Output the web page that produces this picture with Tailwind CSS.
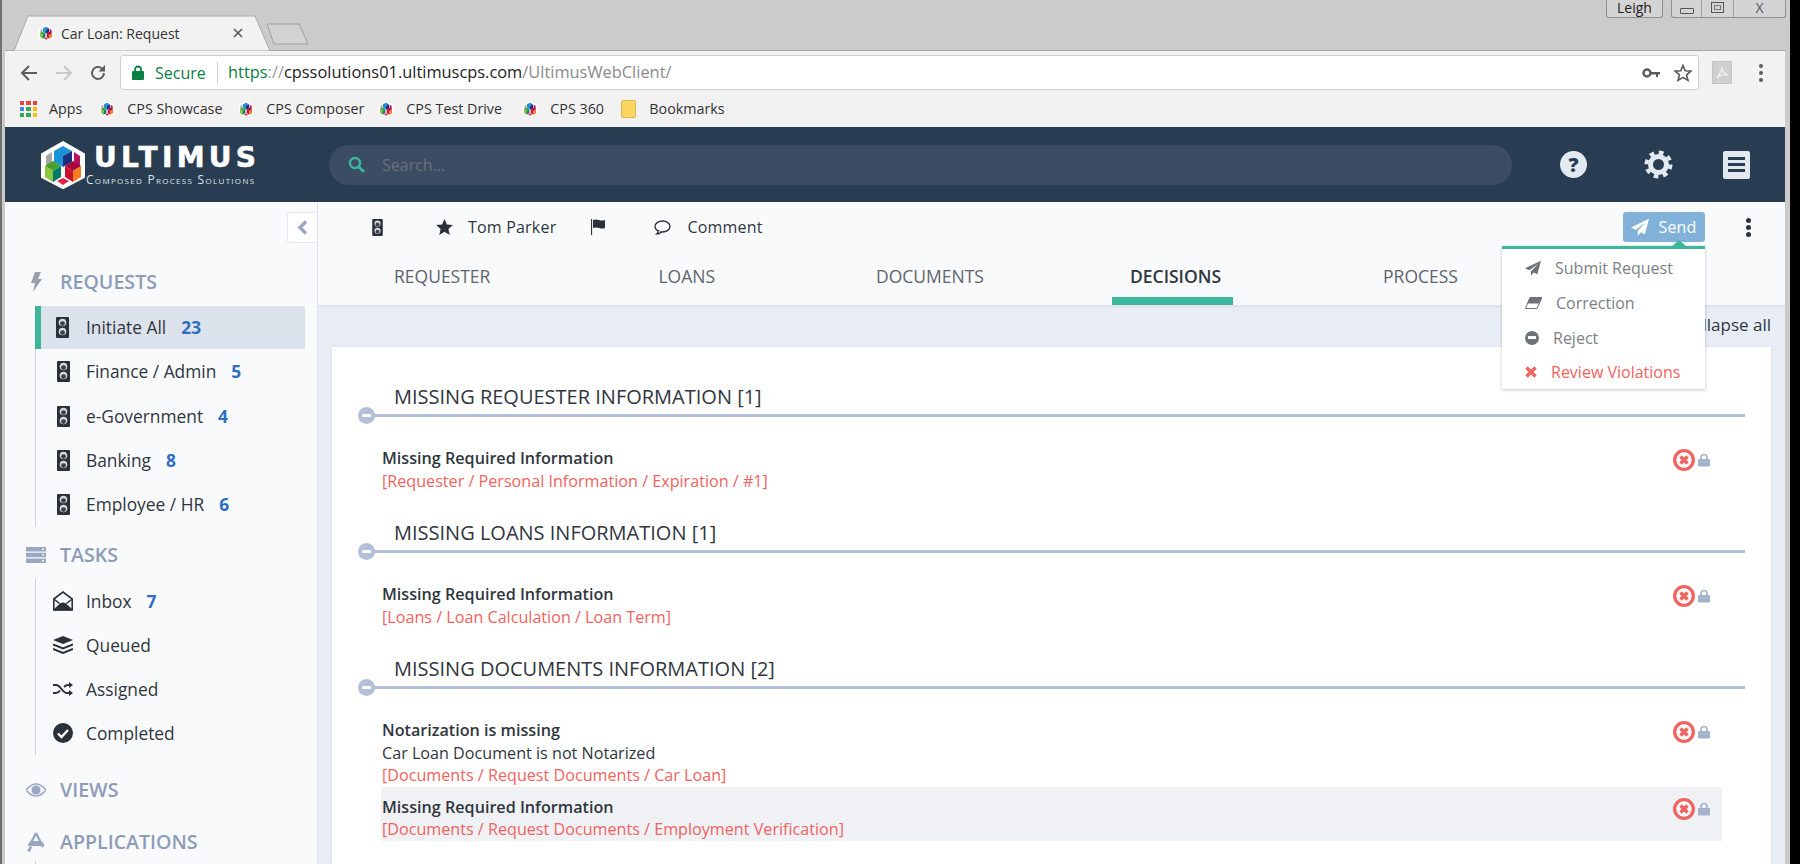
<!DOCTYPE html>
<html lang="en">
  <head>
    <meta charset="UTF-8" />
    <title>Car Loan: Request</title>
    <script src="https://cdn.jsdelivr.net/npm/@tailwindcss/browser@4"></script>
  </head>
  <body class="bg-black w-[1800px] h-[864px] overflow-hidden font-['Open_Sans',sans-serif] text-[#30363d]">
    <svg class="hidden">
      <symbol id="cube" viewBox="0 0 48 48">
        <polygon points="24,1 45,13 45,36 24,47 3,36 3,13" fill="#fff" stroke="#fff" stroke-width="2" stroke-linejoin="round" />
        <polygon points="7,15 13,11 13,22 7,26" fill="#a5a5a5" />
        <polygon points="41,15 35,11 35,22 41,26" fill="#b5135f" />
        <polygon points="15,10 24,5 33,10 24,15 24,26 15,21" fill="#1b93d6" />
        <polygon points="33,10 24,15 24,26 33,21" fill="#1c2f7f" />
        <polygon points="6,25 14,20 22,25 14,30" fill="#4aa02c" />
        <polygon points="6,25 14,30 14,41 6,36" fill="#8dc63f" />
        <polygon points="14,30 22,25 22,36 14,41" fill="#007a6b" />
        <polygon points="26,25 34,20 42,25 34,30" fill="#a6093d" />
        <polygon points="26,25 34,30 34,41 26,36" fill="#c8102e" />
        <polygon points="34,30 42,25 42,36 34,41" fill="#f47b20" />
        <polygon points="18,40 24,37 30,40 24,44" fill="#e0224e" />
      </symbol>
      <symbol id="light" viewBox="0 0 13 21">
        <rect width="13" height="21" rx="1" fill="#2b3139" />
        <circle cx="6.500" cy="5.500" r="3.800" fill="#d5d9df" />
        <circle cx="6.500" cy="6.600" r="2.400" fill="#3a414b" />
        <circle cx="6.500" cy="14.500" r="3.800" fill="#d5d9df" />
        <circle cx="6.500" cy="15.600" r="2.400" fill="#3a414b" />
      </symbol>
      <symbol id="plane" viewBox="0 0 24 24">
        <path d="M24 1 0 12.500l6.500 3L20 5.500 9 17v6.500l4.200-4.600 5.300 2.600z" fill="currentColor" />
      </symbol>
      <symbol id="error" viewBox="0 0 22 22">
        <circle cx="11" cy="11" r="9.300" fill="#fff" stroke="#f0635f" stroke-width="3.300" />
        <path d="M7.500 7.500l7 7m0-7l-7 7" stroke="#f0635f" stroke-width="3.600" />
      </symbol>
      <symbol id="lock" viewBox="0 0 12 13">
        <path d="M3 6V4a3 3 0 0 1 6 0v2" fill="none" stroke="#a5b2cc" stroke-width="1.700" />
        <rect y="5.500" width="12" height="7.500" rx="1" fill="#a5b2cc" />
      </symbol>
    </svg>

    <div class="w-[1790px] h-[864px] flex flex-col bg-[#cbcbcb] border-l-2 border-[#6f6f6f]">
      <!-- browser tabs -->
      <div class="h-[50px] flex shrink-0">
        <div class="relative w-[256px] h-[36px] mt-[15px] ml-[12px] flex items-center">
          <svg class="absolute left-0 top-0" width="256" height="36"><polygon points="0,36 14,1 241,1 256,36" fill="#f2f2f2" stroke="#a8a8a8" /></svg>
          <svg class="relative ml-[24px]" width="16" height="16"><use href="#cube" /></svg>
          <span class="relative ml-[7px] text-[14px] text-[#333]">Car Loan: Request</span>
          <svg class="relative ml-[53px]" width="10" height="10"><path d="M1 1l8 8m0-8l-8 8" stroke="#555" stroke-width="1.500" /></svg>
        </div>
        <svg class="mt-[23px] -ml-[4px]" width="44" height="22"><polygon points="1,1 33,1 42,21 8,21" fill="#d2d2d2" stroke="#a0a0a0" stroke-linejoin="round" /></svg>
        <div class="ml-auto flex items-start mr-[4px]">
          <div class="w-[57px] h-[18px] rounded-b-[3px] border border-t-0 border-[#909090] bg-[#d4d4d4] text-center text-[14px] leading-[16px] text-[#222]">Leigh</div>
          <div class="ml-[8px] w-[115px] h-[18px] rounded-b-[3px] border border-t-0 border-[#909090] bg-[#d4d4d4] flex">
            <div class="w-[30px] border-r border-[#a0a0a0] flex justify-center"><div class="w-[14px] h-[6px] mt-[8px] border border-[#555] rounded-[1px]"></div></div>
            <div class="w-[32px] border-r border-[#a0a0a0] flex justify-center"><div class="w-[13px] h-[11px] mt-[2px] border border-[#555] p-[2px]"><div class="w-full h-full border border-[#777]"></div></div></div>
            <div class="flex-1 text-center text-[14px] leading-[15px] text-[#555]">X</div>
          </div>
        </div>
      </div>

      <div class="flex-1 min-h-0 ml-[3px] mr-[5px] flex flex-col">
        <!-- browser toolbar -->
        <div class="h-[77px] shrink-0 bg-[#f2f2f2] border-t border-[#a8a8a8] flex flex-col">
          <div class="h-[40px] pt-[3px] flex items-center">
            <svg class="ml-[15px]" width="18" height="18" viewBox="0 0 18 18"><path d="M17 9H3m6-7L2 9l7 7" fill="none" stroke="#5c5c5c" stroke-width="2" /></svg>
            <svg class="ml-[17px]" width="18" height="18" viewBox="0 0 18 18"><path d="M1 9h14M9 2l7 7-7 7" fill="none" stroke="#c8c8c8" stroke-width="2" /></svg>
            <svg class="ml-[16px]" width="18" height="18" viewBox="0 0 18 18"><path d="M15 9a6 6 0 1 1-2-4.500" fill="none" stroke="#5c5c5c" stroke-width="2" /><polygon points="16,1 16,7.500 9.500,7.500" fill="#5c5c5c" /></svg>
            <div class="ml-[13px] w-[1579px] h-[35px] bg-white border border-[#cfcfcf] rounded-[3px] flex items-center">
              <svg class="ml-[11px]" width="12" height="15" viewBox="0 0 12 15"><path d="M3 7V4.500a3 3 0 0 1 6 0V7" fill="none" stroke="#0b8043" stroke-width="1.800" /><rect y="6" width="12" height="9" rx="1" fill="#0b8043" /></svg>
              <span class="ml-[11px] text-[16px] text-[#0b8043] w-[50px]">Secure</span>
              <div class="ml-[12px] w-px h-[22px] bg-[#cfcfcf]"></div>
              <div class="ml-[10px] text-[16.400px] whitespace-nowrap"><span class="text-[#0b8043]">https</span><span class="text-[#9a9a9a]">://</span><span class="text-[#222]">cpssolutions01.ultimuscps.com</span><span class="text-[#8a8a8a]">/UltimusWebClient/</span></div>
              <svg class="ml-auto" width="18" height="12" viewBox="0 0 18 12"><circle cx="5" cy="6" r="3.500" fill="none" stroke="#5c5c5c" stroke-width="2.500" /><path d="M8 5h10v2.500h-2V10h-2V7.500H8z" fill="#5c5c5c" /></svg>
              <svg class="ml-[14px] mr-[6px]" width="18" height="18" viewBox="0 0 24 24"><polygon points="12,2 15,9 22.500,9.500 16.800,14.400 18.600,21.800 12,17.800 5.400,21.800 7.200,14.400 1.500,9.500 9,9" fill="none" stroke="#5c5c5c" stroke-width="2.200" /></svg>
            </div>
            <div class="ml-[13px] w-[20px] h-[23px] bg-[#d0d0d0] border border-[#c4c4c4] flex items-center justify-center"><svg width="14" height="14" viewBox="0 0 14 14"><path d="M7 1c-1 3 3 7 6 8-3-.5-8 0-11 3 2-3 5-8 5-11z" fill="none" stroke="#f2f2f2" stroke-width="1.200" /></svg></div>
            <div class="ml-[27px] flex flex-col gap-[3px]"><div class="w-[4px] h-[4px] rounded-full bg-[#5c5c5c]"></div><div class="w-[4px] h-[4px] rounded-full bg-[#5c5c5c]"></div><div class="w-[4px] h-[4px] rounded-full bg-[#5c5c5c]"></div></div>
          </div>
          <div class="h-[36px] flex items-center text-[14.300px] text-[#333] whitespace-nowrap">
            <div class="ml-[15px] grid grid-cols-3 gap-[2px] w-[17px]">
              <i class="h-[4px] bg-[#e8453c]"></i><i class="h-[4px] bg-[#e8453c]"></i><i class="h-[4px] bg-[#e8453c]"></i>
              <i class="h-[4px] bg-[#4285f4]"></i><i class="h-[4px] bg-[#34a853]"></i><i class="h-[4px] bg-[#fbbc05]"></i>
              <i class="h-[4px] bg-[#34a853]"></i><i class="h-[4px] bg-[#34a853]"></i><i class="h-[4px] bg-[#fbbc05]"></i>
            </div>
            <span class="ml-[12px]">Apps</span>
            <svg class="ml-[17px]" width="16" height="16"><use href="#cube" /></svg><span class="ml-[12px] w-[111px]">CPS Showcase</span>
            <svg width="16" height="16"><use href="#cube" /></svg><span class="ml-[12px] w-[112px]">CPS Composer</span>
            <svg width="16" height="16"><use href="#cube" /></svg><span class="ml-[12px] w-[116px]">CPS Test Drive</span>
            <svg width="16" height="16"><use href="#cube" /></svg><span class="ml-[12px] w-[71px]">CPS 360</span>
            <div class="w-[15px] h-[18px] bg-[#fcd663] border border-[#d9b54a] rounded-[2px]"></div><span class="ml-[13px]">Bookmarks</span>
          </div>
        </div>

        <!-- app header -->
        <header class="h-[75px] shrink-0 bg-[#293d52] flex items-center">
          <svg class="ml-[34px]" width="48" height="48"><use href="#cube" /></svg>
          <div class="ml-[7px] w-[170px] text-white">
            <div class="font-['DejaVu_Sans',sans-serif] font-bold text-[28px] leading-[30px] tracking-[4.300px] [-webkit-text-stroke:0.6px_white] whitespace-nowrap">ULTIMUS</div>
            <div class="text-[12px] leading-[13px] [font-variant:small-caps] tracking-[1.300px] text-[#dfe5ec] whitespace-nowrap -ml-[8px]">Composed Process Solutions</div>
          </div>
          <div class="ml-[65px] w-[1183px] h-[40px] rounded-full bg-[#3c4c63] flex items-center">
            <svg class="ml-[19px]" width="17" height="17" viewBox="0 0 17 17"><circle cx="7" cy="7" r="5" fill="none" stroke="#3db79b" stroke-width="2.400" /><path d="M10.500 10.500L16 16" stroke="#3db79b" stroke-width="2.600" /></svg>
            <span class="ml-[17px] text-[16px] text-[#6a7079]">Search...</span>
          </div>
          <div class="ml-[48px] w-[27px] h-[27px] rounded-full bg-[#e3e9f1] text-center text-[20px] leading-[27px] font-extrabold text-[#293d52]">?</div>
          <svg class="ml-[57px]" width="29" height="29" viewBox="0 0 29 29"><circle cx="14.500" cy="14.500" r="12" fill="none" stroke="#e3e9f1" stroke-width="4" stroke-dasharray="4.700 4.720" /><circle cx="14.500" cy="14.500" r="8" fill="none" stroke="#e3e9f1" stroke-width="5" /></svg>
          <div class="ml-[50px] w-[27px] h-[28px] rounded-[2px] bg-[#e3e9f1] flex flex-col justify-center gap-[3px] px-[5px]"><div class="h-[3px] bg-[#293d52]"></div><div class="h-[3px] bg-[#293d52]"></div><div class="h-[3px] bg-[#293d52]"></div></div>
        </header>

        <div class="flex-1 min-h-0 flex">
          <!-- sidebar -->
          <aside class="relative w-[313px] shrink-0 bg-[#f9fafc] border-r border-[#dfe2e8] overflow-hidden">
            <button class="absolute right-0 top-[10px] w-[30px] h-[31px] bg-white rounded-l-[3px] border border-r-0 border-[#e6e9ef] flex items-center justify-center">
              <svg width="11" height="15" viewBox="0 0 11 15"><path d="M9 1.500L3 7.500l6 6" fill="none" stroke="#9aa7c2" stroke-width="3.500" /></svg>
            </button>
            <div class="mt-[65px] h-[30px] flex items-center text-[#8d9cb6] text-[19.600px] font-semibold">
              <svg class="ml-[25px]" width="12" height="20" viewBox="0 0 12 20"><path d="M5 0h6L8 7h4L3 20l2-9H1z" fill="#9aa0aa" /></svg>
              <span class="ml-[18px]">REQUESTS</span>
            </div>
            <ul class="mt-[9px] ml-[30px] w-[270px] border-l border-[#cfd2d8] text-[17.350px]">
              <li class="h-[43px] -ml-px flex items-center bg-[#dce2ec] border-l-[6px] border-[#3db79b]"><svg class="ml-[15px]" width="13" height="21"><use href="#light" /></svg><span class="ml-[17px]">Initiate All</span><span class="ml-[15px] font-bold text-[#2f6dbf]">23</span></li>
              <li class="h-[45px] flex items-center"><svg class="ml-[21px]" width="13" height="21"><use href="#light" /></svg><span class="ml-[16px]">Finance / Admin</span><span class="ml-[15px] font-bold text-[#2f6dbf]">5</span></li>
              <li class="h-[44px] flex items-center"><svg class="ml-[21px]" width="13" height="21"><use href="#light" /></svg><span class="ml-[16px]">e-Government</span><span class="ml-[15px] font-bold text-[#2f6dbf]">4</span></li>
              <li class="h-[44px] flex items-center"><svg class="ml-[21px]" width="13" height="21"><use href="#light" /></svg><span class="ml-[16px]">Banking</span><span class="ml-[15px] font-bold text-[#2f6dbf]">8</span></li>
              <li class="h-[45px] flex items-center"><svg class="ml-[21px]" width="13" height="21"><use href="#light" /></svg><span class="ml-[16px]">Employee / HR</span><span class="ml-[15px] font-bold text-[#2f6dbf]">6</span></li>
            </ul>
            <div class="mt-[13px] h-[30px] flex items-center text-[#8d9cb6] text-[19.600px] font-semibold">
              <svg class="ml-[21px]" width="20" height="16" viewBox="0 0 20 16"><g fill="#9aa7c2"><rect width="20" height="4.500" rx=".5" /><rect y="5.700" width="20" height="4.500" rx=".5" /><rect y="11.400" width="20" height="4.500" rx=".5" /></g><g fill="#f9fafc"><rect x="16" y="1.500" width="2" height="1.500" /><rect x="16" y="7.200" width="2" height="1.500" /><rect x="16" y="12.900" width="2" height="1.500" /></g></svg>
              <span class="ml-[14px]">TASKS</span>
            </div>
            <ul class="mt-[9px] ml-[30px] w-[270px] border-l border-[#cfd2d8] text-[17.350px]">
              <li class="h-[44px] flex items-center"><svg class="ml-[17px]" width="20" height="20" viewBox="0 0 20 20"><path d="M.8 8L10 1l9.200 7v11H.8z" fill="none" stroke="#2b3139" stroke-width="1.600" /><path d="M1 18l6-5.500q3-2 6 0l6 5.500v1.500H1zM1 9l5 4 1-1-5-4zM19 9l-5 4-1-1 5-4z" fill="#2b3139" /></svg><span class="ml-[13px]">Inbox</span><span class="ml-[15px] font-bold text-[#2f6dbf]">7</span></li>
              <li class="h-[44px] flex items-center"><svg class="ml-[17px]" width="20" height="18" viewBox="0 0 20 18"><path d="M10 0l10 4-10 4L0 4z" fill="#2b3139" /><path d="M0 8.500l10 4 10-4M0 13l10 4 10-4" fill="none" stroke="#2b3139" stroke-width="2" /></svg><span class="ml-[13px]">Queued</span></li>
              <li class="h-[44px] flex items-center"><svg class="ml-[17px]" width="20" height="14" viewBox="0 0 20 14"><path d="M0 3h3c5 0 6 8 11 8h2M0 11h3c2 0 3-1 4-2.500M11 5c1-1 2-2 4-2h1" fill="none" stroke="#2b3139" stroke-width="2" /><path d="M16 0l4 3-4 3zM16 8l4 3-4 3z" fill="#2b3139" /></svg><span class="ml-[13px]">Assigned</span></li>
              <li class="h-[44px] flex items-center"><svg class="ml-[17px]" width="20" height="20" viewBox="0 0 20 20"><circle cx="10" cy="10" r="10" fill="#2b3139" /><path d="M5 10.500l3.500 3.500L15 7" fill="none" stroke="#fff" stroke-width="2.400" /></svg><span class="ml-[13px]">Completed</span></li>
            </ul>
            <div class="mt-[20px] h-[30px] flex items-center text-[#8d9cb6] text-[19.600px] font-semibold">
              <svg class="ml-[21px]" width="20" height="14" viewBox="0 0 20 14"><path d="M0 7q10-12 20 0-10 12-20 0z" fill="none" stroke="#9aa7c2" stroke-width="1.500" /><circle cx="10" cy="7" r="4.500" fill="#9aa7c2" /></svg>
              <span class="ml-[14px]">VIEWS</span>
            </div>
            <div class="mt-[22px] h-[30px] flex items-center text-[#8d9cb6] text-[19.600px] font-semibold">
              <svg class="ml-[21px]" width="20" height="20" viewBox="0 0 20 20"><path d="M10 1L4 13M10 1l7 14" fill="none" stroke="#9aa7c2" stroke-width="2.400" /><path d="M5 9h10l3 3v2H2v-2zM1 19l3-5 2 1-2 5z" fill="#9aa7c2" /></svg>
              <span class="ml-[14px]">APPLICATIONS</span>
            </div>
            <div class="mt-[4px] ml-[30px] h-[10px] border-l border-[#cfd2d8]"></div>
          </aside>

          <main class="flex-1 min-w-0 bg-[#e8edf5] flex flex-col">
            <!-- action bar and tabs -->
            <div class="h-[104px] shrink-0 bg-[#f9fafc] border-b border-[#dfe2e8] shadow-[0_1px_2px_rgba(0,0,0,0.05)] flex flex-col">
              <div class="h-[50px] flex items-center text-[16px] tracking-[0.2px]">
                <svg class="ml-[54px]" width="11" height="17"><use href="#light" /></svg>
                <svg class="ml-[53px]" width="17" height="16" viewBox="0 0 24 23"><polygon points="12,0 15.500,8 24,8.800 17.600,14.500 19.500,23 12,18.500 4.500,23 6.400,14.500 0,8.800 8.500,8" fill="#2b3139" /></svg>
                <span class="ml-[15px]">Tom Parker</span>
                <svg class="ml-[35px]" width="15" height="16" viewBox="0 0 15 16"><path d="M.5 0v16" stroke="#2b3139" stroke-width="1.200" /><path d="M2 1q3-1 6 0t6 0v8q-3 1-6 0t-6 0z" fill="#2b3139" /></svg>
                <svg class="ml-[48px]" width="17" height="15" viewBox="0 0 17 15"><ellipse cx="8.500" cy="6.500" rx="7.500" ry="5.500" fill="#f9fafc" stroke="#2b3139" stroke-width="1.300" /><path d="M4.500 10.500q0 2-2 3.500 3 0 5-2" fill="#f9fafc" stroke="#2b3139" stroke-width="1.200" /></svg>
                <span class="ml-[16px]">Comment</span>
                <button class="ml-auto w-[82px] h-[30px] rounded-[3px] bg-[#82b2d9] text-white flex items-center justify-center gap-[9px] text-[16px]">
                  <svg width="18" height="18"><use href="#plane" /></svg>Send
                </button>
                <div class="ml-[41px] mr-[34px] flex flex-col gap-[2px]"><div class="w-[5px] h-[5px] rounded-full bg-[#2b3139]"></div><div class="w-[5px] h-[5px] rounded-full bg-[#2b3139]"></div><div class="w-[5px] h-[5px] rounded-full bg-[#2b3139]"></div></div>
              </div>
              <div class="h-[53px] flex text-[17.500px] font-medium text-[#5f656d]">
                <div class="ml-[58px] px-[18px] h-[48px] flex items-center">REQUESTER</div>
                <div class="ml-[132px] px-[18px] h-[48px] flex items-center">LOANS</div>
                <div class="ml-[125px] px-[18px] h-[48px] flex items-center">DOCUMENTS</div>
                <div class="ml-[110px] pl-[18px] pr-[12px] flex items-center font-semibold text-[#30363d] h-[53px] pt-[3px] border-b-[8px] border-[#3db79b]">DECISIONS</div>
                <div class="ml-[132px] px-[18px] h-[48px] flex items-center">PROCESS</div>
              </div>
            </div>

            <div class="h-[41px] shrink-0 pr-[14px] pb-[4px] flex items-center justify-end text-[17px]">Collapse all</div>

            <!-- decisions card -->
            <div class="flex-1 min-h-0 ml-[14px] mr-[14px] bg-white pt-[35px] pl-[33px] pr-[26px] shadow-[0_0_2px_rgba(0,0,0,0.1)] overflow-hidden">
              <section class="relative">
                <h3 class="h-[35px] pl-[29px] border-b-[3px] border-[#b4c0d9] text-[20px] leading-[30px]">MISSING REQUESTER INFORMATION [1]</h3>
                <div class="absolute -left-[7px] top-[25px] w-[17px] h-[17px] rounded-full bg-[#b4c0d9] flex items-center justify-center"><div class="w-[9px] h-[3px] bg-white rounded-[1px]"></div></div>
                <div class="mt-[20px] ml-[16px] mr-[23px] pl-[1px] pr-[12px] pt-[10px] flex justify-between items-start text-[16.150px] leading-[22.500px]">
                  <div>
                    <div class="font-semibold">Missing Required Information</div>
                    <div class="text-[#f0635f]">[Requester / Personal Information / Expiration / #1]</div>
                  </div>
                  <div class="mt-[2px] flex items-center gap-[3px]"><svg width="22" height="22"><use href="#error" /></svg><svg width="12" height="14"><use href="#lock" /></svg></div>
                </div>
              </section>
              <section class="relative mt-[26px]">
                <h3 class="h-[35px] pl-[29px] border-b-[3px] border-[#b4c0d9] text-[20px] leading-[30px]">MISSING LOANS INFORMATION [1]</h3>
                <div class="absolute -left-[7px] top-[25px] w-[17px] h-[17px] rounded-full bg-[#b4c0d9] flex items-center justify-center"><div class="w-[9px] h-[3px] bg-white rounded-[1px]"></div></div>
                <div class="mt-[20px] ml-[16px] mr-[23px] pl-[1px] pr-[12px] pt-[10px] flex justify-between items-start text-[16.150px] leading-[22.500px]">
                  <div>
                    <div class="font-semibold">Missing Required Information</div>
                    <div class="text-[#f0635f]">[Loans / Loan Calculation / Loan Term]</div>
                  </div>
                  <div class="mt-[2px] flex items-center gap-[3px]"><svg width="22" height="22"><use href="#error" /></svg><svg width="12" height="14"><use href="#lock" /></svg></div>
                </div>
              </section>
              <section class="relative mt-[26px]">
                <h3 class="h-[35px] pl-[29px] border-b-[3px] border-[#b4c0d9] text-[20px] leading-[30px]">MISSING DOCUMENTS INFORMATION [2]</h3>
                <div class="absolute -left-[7px] top-[25px] w-[17px] h-[17px] rounded-full bg-[#b4c0d9] flex items-center justify-center"><div class="w-[9px] h-[3px] bg-white rounded-[1px]"></div></div>
                <div class="mt-[20px] ml-[16px] mr-[23px] pl-[1px] pr-[12px] pt-[10px] flex justify-between items-start text-[16.150px] leading-[22.500px]">
                  <div>
                    <div class="font-semibold">Notarization is missing</div>
                    <div>Car Loan Document is not Notarized</div>
                    <div class="text-[#f0635f]">[Documents / Request Documents / Car Loan]</div>
                  </div>
                  <div class="mt-[2px] flex items-center gap-[3px]"><svg width="22" height="22"><use href="#error" /></svg><svg width="12" height="14"><use href="#lock" /></svg></div>
                </div>
                <div class="ml-[16px] mr-[23px] pl-[1px] pr-[12px] pt-[9px] bg-[#f0f1f5] flex justify-between items-start text-[16.150px] leading-[22.500px]">
                  <div>
                    <div class="font-semibold">Missing Required Information</div>
                    <div class="text-[#f0635f]">[Documents / Request Documents / Employment Verification]</div>
                  </div>
                  <div class="mt-[2px] flex items-center gap-[3px]"><svg width="22" height="22"><use href="#error" /></svg><svg width="12" height="14"><use href="#lock" /></svg></div>
                </div>
              </section>
            </div>
          </main>
        </div>
      </div>
    </div>

    <!-- send dropdown -->
    <div class="absolute left-[1502px] top-[246px] w-[203px] h-[143px] bg-white border-t-[3px] border-[#3db79b] shadow-[0_1px_3px_rgba(0,0,0,0.25)] text-[16px] text-[#7b7f83]">
      <div class="absolute right-[18px] -top-[9px] w-0 h-0 border-x-[8px] border-x-transparent border-b-[7px] border-b-[#3db79b]"></div>
      <div class="h-[35px] mt-[1px] flex items-center"><svg class="ml-[23px] text-[#6f7378]" width="16" height="16"><use href="#plane" /></svg><span class="ml-[14px]">Submit Request</span></div>
      <div class="h-[35px] flex items-center"><svg class="ml-[23px]" width="17" height="12" viewBox="0 0 17 12"><path d="M5 .5h12L12 11.500H.5z" fill="#fff" stroke="#6f7378" /><path d="M5 .5h12l-3 6H2z" fill="#6f7378" /></svg><span class="ml-[14px]">Correction</span></div>
      <div class="h-[35px] flex items-center"><div class="ml-[23px] w-[14px] h-[14px] rounded-full bg-[#6f7378] flex items-center justify-center"><div class="w-[8px] h-[3px] bg-white"></div></div><span class="ml-[14px]">Reject</span></div>
      <div class="h-[34px] flex items-center text-[#f0635f]"><svg class="ml-[23px]" width="12" height="12" viewBox="0 0 12 12"><path d="M1.500 1.500l9 9m0-9l-9 9" stroke="#f0635f" stroke-width="3.400" /></svg><span class="ml-[14px]">Review Violations</span></div>
    </div>
  </body>
</html>
